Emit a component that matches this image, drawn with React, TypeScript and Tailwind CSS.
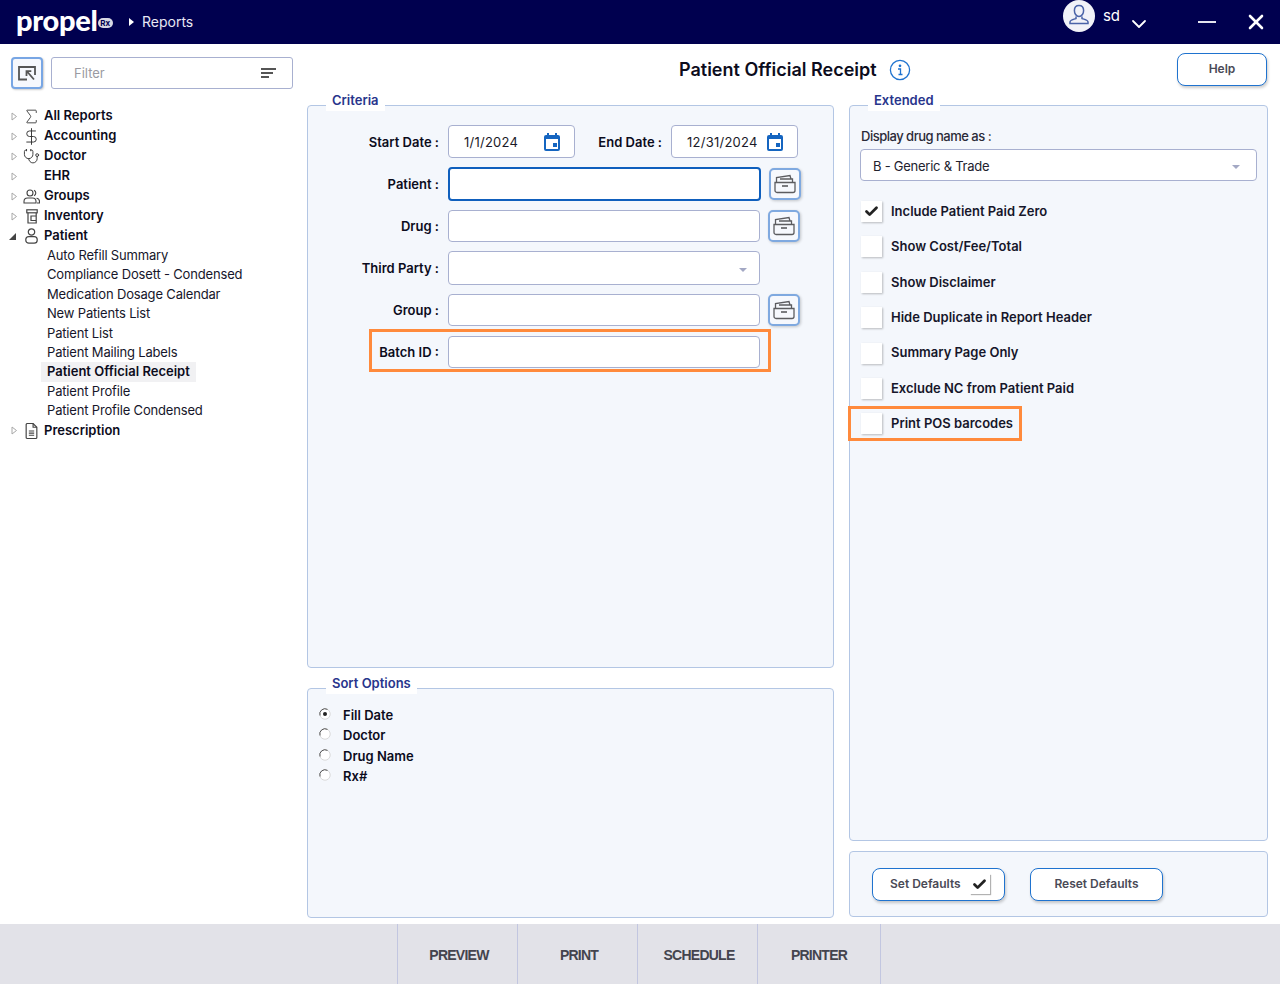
import type { ReactNode } from 'react'
import { Check, ChevronDown, X, Sigma, DollarSign, Stethoscope } from 'lucide-react'

const Calendar = () => (
  <svg width="16" height="18" viewBox="0 0 16 18" className="shrink-0">
    <path d="M3 0h2v2h6V0h2v2h1a2 2 0 0 1 2 2v12a2 2 0 0 1-2 2H2a2 2 0 0 1-2-2V4a2 2 0 0 1 2-2h1z" fill="#1565c0" />
    <rect x="2" y="6" width="12" height="10" fill="#fff" />
    <rect x="9" y="10" width="4" height="4" fill="#1565c0" />
  </svg>
)

const Drawer = () => (
  <svg width="24" height="20" viewBox="0 0 24 20" fill="none" stroke="#5c5c60" strokeWidth="1.3">
    <path d="M3.500 8V3.500L17 1.500l1 3.500M19.500 8V5H7" />
    <path d="M2 8.500h20v8a2 2 0 0 1-2 2H4a2 2 0 0 1-2-2z" />
    <path d="M9 12h6" strokeWidth="1.6" />
  </svg>
)

const FolderButton = () => (
  <button className="ml-2 flex h-8 w-8 shrink-0 items-center justify-center rounded-[5px] border-2 border-[#7fa9e0] bg-[#f6f8fd] shadow-[1px_1px_3px_rgba(0,0,0,0.2)]">
    <Drawer />
  </button>
)

const SelectArrow = () => <span className="block h-0 w-0 border-x-[4px] border-t-[4px] border-x-transparent border-t-[#a3a8c4]" />

const UserGroupIcon = () => (
  <svg width="17" height="15" viewBox="0 0 17 15" fill="none" stroke="#444" strokeWidth="1.1" className="shrink-0">
    <circle cx="7" cy="4" r="3" />
    <path d="M1 14v-1.500A3.500 3.500 0 0 1 4.500 9h5a3.500 3.500 0 0 1 3.500 3.500V14z" />
    <path d="M11 1.300a3 3 0 0 1 0 5.500M13.500 9.200A3.400 3.400 0 0 1 16.500 12.500V14H14" />
  </svg>
)

const BottleIcon = () => (
  <svg width="12" height="15" viewBox="0 0 12 15" fill="none" stroke="#444" strokeWidth="1.2" className="shrink-0">
    <rect x="0.800" y="0.800" width="10.400" height="3" />
    <path d="M2 4v10h8.200V4" />
    <path d="M10 7H5v4.500h5" />
  </svg>
)

const PersonIcon = () => (
  <svg width="13" height="16" viewBox="0 0 13 16" fill="none" stroke="#444" strokeWidth="1.2" className="shrink-0">
    <circle cx="6.500" cy="4" r="3.200" />
    <rect x="0.800" y="8.600" width="11.400" height="6.600" rx="3" />
  </svg>
)

const DocIcon = () => (
  <svg width="13" height="16" viewBox="0 0 12 15" fill="none" stroke="#444" strokeWidth="1.1" className="shrink-0">
    <path d="M1 1.500a1 1 0 0 1 1-1h5.500L11 4v9.500a1 1 0 0 1-1 1H2a1 1 0 0 1-1-1z" />
    <path d="M7.500 0.500V4H11M3.500 7.500h5M3.500 9.500h5M3.500 11.500h5" />
  </svg>
)

function TreeRow({ label, icon, open }: { label: string; icon?: ReactNode; open?: boolean }) {
  return (
    <div className="flex h-5 items-center pl-[9px]">
      <span className="flex w-[15px] items-center">
        {open ? (
          <span className="h-0 w-0 border-b-[7px] border-l-[7px] border-b-[#444] border-l-transparent" />
        ) : (
          <svg width="7" height="9" viewBox="0 0 7 9" className="ml-[2px]">
            <path d="M1 1l4.500 3.500L1 8z" fill="#fff" stroke="#a8a8a8" />
          </svg>
        )}
      </span>
      <span className="mr-[5px] flex w-[15px] shrink-0 justify-center">{icon}</span>
      <span className="font-semibold text-[#0c0c1c]">{label}</span>
    </div>
  )
}

function Sidebar() {
  const patientReports = [
    'Auto Refill Summary',
    'Compliance Dosett - Condensed',
    'Medication Dosage Calendar',
    'New Patients List',
    'Patient List',
    'Patient Mailing Labels',
    'Patient Official Receipt',
    'Patient Profile',
    'Patient Profile Condensed',
  ]

  return (
    <aside className="w-[300px] shrink-0 pt-[13px]">
      <div className="flex gap-2 pl-[11px]">
        <button className="flex h-8 w-8 items-center justify-center rounded-[4px] border-2 border-[#78a6e4] bg-[#f6f8fd] shadow-[1px_1px_2px_rgba(0,0,0,0.2)]">
          <svg width="18" height="15" viewBox="0 0 18 15" fill="none" stroke="#555" strokeWidth="1.8">
            <path d="M9 13.500H1V1h16v8" />
            <path d="M16 13.500L9.500 6M8.500 10V5.200h4.800" />
          </svg>
        </button>
        <div className="flex h-8 w-[242px] items-center justify-between rounded-[3px] border border-[#a8b0d0] pl-[22px] pr-4 text-[#9a9aa2]">
          <span className="pt-[2px]">Filter</span>
          <span className="flex flex-col gap-[2px]">
            <span className="h-[2px] w-[15px] bg-[#555]" />
            <span className="h-[2px] w-[12px] bg-[#555]" />
            <span className="h-[2px] w-[8px] bg-[#555]" />
          </span>
        </div>
      </div>

      <div className="mt-[17px]">
        <TreeRow label="All Reports" icon={<Sigma size={19} strokeWidth={1.1} color="#333" className="shrink-0" />} />
        <TreeRow label="Accounting" icon={<DollarSign size={19} strokeWidth={1.2} color="#333" className="shrink-0" />} />
        <TreeRow label="Doctor" icon={<Stethoscope size={17} strokeWidth={1.3} color="#333" className="shrink-0" />} />
        <TreeRow label="EHR" />
        <TreeRow label="Groups" icon={<UserGroupIcon />} />
        <TreeRow label="Inventory" icon={<BottleIcon />} />
        <TreeRow label="Patient" icon={<PersonIcon />} open />
        <div className="ml-[41px]">
          {patientReports.map((name) => (
            <div
              key={name}
              className={
                name === 'Patient Official Receipt'
                  ? 'flex h-[19.4px] w-fit items-center bg-[#f1f1f3] px-[6px] font-semibold text-[#0c0c1c]'
                  : 'flex h-[19.4px] w-fit items-center px-[6px] tracking-[-0.17px] text-[#16162a]'
              }
            >
              {name}
            </div>
          ))}
        </div>
        <TreeRow label="Prescription" icon={<DocIcon />} />
      </div>
    </aside>
  )
}

function Panel({ title, className, children }: { title?: string; className: string; children: ReactNode }) {
  return (
    <div className={`relative rounded-[4px] border border-[#b3c6e4] bg-[#f4f7fc] ${className}`}>
      {title && (
        <span className="absolute left-[18px] top-[-14px] bg-white px-[6px] pb-[3px] font-semibold leading-[16px] text-[#28358c]">
          {title}
        </span>
      )}
      {children}
    </div>
  )
}

function FieldLabel({ children, className = 'w-[131px]' }: { children: ReactNode; className?: string }) {
  return <label className={`mr-[9px] shrink-0 pt-[2px] text-right font-semibold text-[#0c0c1c] ${className}`}>{children}</label>
}

const fieldClass = 'rounded-[4px] border border-[#a8b0d0] bg-white'

function DateField({ value }: { value: string }) {
  return (
    <div className={`flex h-[33px] w-[127px] items-center justify-between pl-[15px] pr-[14px] text-[#1a1a28] ${fieldClass}`}>
      <span className="pt-[3px] tracking-[0.25px]">{value}</span>
      <Calendar />
    </div>
  )
}

function CriteriaPanel() {
  return (
    <Panel title="Criteria" className="h-[563px] pt-[19px]">
      <div className="flex items-center">
        <FieldLabel>Start Date :</FieldLabel>
        <DateField value="1/1/2024" />
        <FieldLabel className="w-[87px]">End Date :</FieldLabel>
        <DateField value="12/31/2024" />
      </div>
      <div className="mt-[9px] flex items-center">
        <FieldLabel>Patient :</FieldLabel>
        <input readOnly className="h-[34px] w-[313px] rounded-[4px] border-2 border-[#0f5fbd] bg-white" />
        <FolderButton />
      </div>
      <div className="mt-[9px] flex items-center">
        <FieldLabel>Drug :</FieldLabel>
        <input readOnly className={`h-8 w-[312px] ${fieldClass}`} />
        <FolderButton />
      </div>
      <div className="mt-[9px] flex items-center">
        <FieldLabel>Third Party :</FieldLabel>
        <div className={`flex h-[34px] w-[312px] items-center justify-end pr-[12px] pt-[4px] ${fieldClass}`}>
          <SelectArrow />
        </div>
      </div>
      <div className="mt-[9px] flex items-center">
        <FieldLabel>Group :</FieldLabel>
        <input readOnly className={`h-8 w-[312px] ${fieldClass}`} />
        <FolderButton />
      </div>
      <div className="relative mt-[10px] flex items-center">
        <FieldLabel>Batch ID :</FieldLabel>
        <input readOnly className={`h-8 w-[312px] ${fieldClass}`} />
        <div className="pointer-events-none absolute left-[61px] top-[-7px] h-[43px] w-[402px] border-[3px] border-[#ff8a3c]" />
      </div>
    </Panel>
  )
}

function SortPanel() {
  const options = ['Fill Date', 'Doctor', 'Drug Name', 'Rx#']
  return (
    <Panel title="Sort Options" className="h-[230px] pt-[16px]">
      <div className="pl-[11px]">
        {options.map((opt, i) => (
          <div key={opt} className="flex h-[20.3px] items-center">
            <svg width="12" height="12" viewBox="0 0 12 12" className="mr-3 -translate-y-px">
              <circle cx="6" cy="6" r="5.200" fill="#fff" stroke="#d9d9d9" />
              <path d="M1 7.500A5.200 5.200 0 0 1 8.500 1.400" fill="none" stroke="#555" />
              {i === 0 && <circle cx="6" cy="6" r="2" fill="#222" />}
            </svg>
            <span className="pt-px font-semibold text-[#0c0c1c]">{opt}</span>
          </div>
        ))}
      </div>
    </Panel>
  )
}

function CheckRow({ label, checked, highlight }: { label: string; checked?: boolean; highlight?: boolean }) {
  return (
    <div className="relative ml-px flex h-[21px] items-center">
      <span className="mr-[9px] flex h-[21px] w-[21px] items-center justify-center bg-white shadow-[1px_1px_2px_rgba(0,0,0,0.25)]">
        {checked && <Check size={15} strokeWidth={4.5} color="#222" />}
      </span>
      <span className="font-semibold text-[#16162a]">{label}</span>
      {highlight && (
        <div className="pointer-events-none absolute left-[-13px] top-[-7px] h-[35px] w-[174px] border-[3px] border-[#ff8a3c]" />
      )}
    </div>
  )
}

function ExtendedPanel() {
  return (
    <Panel title="Extended" className="h-[736px] px-[10px] pt-[22px]">
      <div className="pl-px font-medium leading-4 tracking-[-0.5px] text-[#2a2a38]">Display drug name as :</div>
      <div className={`mt-[5px] flex h-8 items-center justify-between pl-3 pr-4 text-[#22222e] ${fieldClass}`}>
        <span className="pt-[3px] tracking-[-0.25px]">B - Generic &amp; Trade</span>
        <span className="pt-[4px]">
          <SelectArrow />
        </span>
      </div>
      <div className="mt-5 flex flex-col gap-[14.4px]">
        <CheckRow label="Include Patient Paid Zero" checked />
        <CheckRow label="Show Cost/Fee/Total" />
        <CheckRow label="Show Disclaimer" />
        <CheckRow label="Hide Duplicate in Report Header" />
        <CheckRow label="Summary Page Only" />
        <CheckRow label="Exclude NC from Patient Paid" />
        <CheckRow label="Print POS barcodes" highlight />
      </div>
    </Panel>
  )
}

const outlineBtn =
  'rounded-lg border-[1.5px] border-[#1f73cf] bg-white font-semibold text-[12px] text-[#4a4a56] shadow-[1px_2px_3px_rgba(0,0,0,0.2)]'

function Header() {
  return (
    <header className="flex h-11 shrink-0 items-center bg-[#00004f] text-white">
      <div className="ml-[16px] flex w-[97px] items-center">
        <span className="-mt-[5px] font-['Lato',sans-serif] text-[29px] font-black leading-none tracking-[-0.3px]">propel</span>
        <span className="ml-auto mt-[1px] flex h-[10px] w-[16px] items-center justify-center rounded-full bg-[#d8d8e4] text-[8px] font-bold text-[#00004f]">Rx</span>
      </div>
      <span className="ml-[16px] h-0 w-0 border-y-[4px] border-l-[5px] border-y-transparent border-l-white" />
      <span className="ml-[8px] -mt-px text-[14px] text-[#e8e8f4]">Reports</span>

      <div className="ml-auto flex h-full">
        <div className="flex h-8 w-8 items-center justify-center rounded-full bg-[#f1f2f8]">
          <svg width="22" height="24" viewBox="0 0 22 24" fill="none" stroke="#4a63a8" strokeWidth="1.5">
            <path d="M11 1.500c3 0 4.600 2.300 4.600 5s-1.600 6-4.600 6-4.600-3.300-4.600-6 1.600-5 4.600-5z" />
            <path d="M8 12.500v2c-2.500.8-6 1.500-6 3.500v1.500h18V18c0-2-3.500-2.700-6-3.500v-2" />
          </svg>
        </div>
        <span className="ml-2 mt-[6px] text-[15px] leading-5">sd</span>
        <ChevronDown size={24} strokeWidth={1.8} className="ml-[7px] mt-[12px]" />
        <span className="ml-[47px] mt-[21px] h-[2px] w-[18px] bg-[#e4e4ee]" />
        <X size={24} strokeWidth={2.6} className="ml-[28px] mr-[12px] mt-[10px]" />
      </div>
    </header>
  )
}

export default function App() {
  const actions = ['PREVIEW', 'PRINT', 'SCHEDULE', 'PRINTER']

  return (
    <div className="flex h-[984px] w-[1280px] flex-col overflow-hidden bg-white font-['Inter',sans-serif] text-[13px]">
      <Header />

      <div className="flex flex-1">
        <Sidebar />

        <main className="w-[980px] pl-[7px]">
          <div className="flex h-[61px] items-start">
            <div className="ml-[372px] mt-[12px] flex items-center">
              <h1 className="pt-px text-[18px] font-semibold leading-[26px] text-[#0c0c1c]">Patient Official Receipt</h1>
              <svg width="22" height="22" viewBox="0 0 22 22" fill="none" stroke="#1f73cf" strokeWidth="1.3" className="ml-3 mt-[1px]">
                <circle cx="11" cy="11" r="9.600" />
                <path d="M9 10h2.500v5.500M9.500 15.500h4" />
                <circle cx="11" cy="6.800" r="0.700" />
              </svg>
            </div>
            <button className={`ml-auto mr-[13px] mt-[9px] h-[33px] w-[90px] pb-[2px] ${outlineBtn}`}>Help</button>
          </div>

          <div className="flex gap-[15px]">
            <div className="flex w-[527px] flex-col gap-5">
              <CriteriaPanel />
              <SortPanel />
            </div>
            <div className="flex w-[419px] flex-col gap-[10px]">
              <ExtendedPanel />
              <Panel className="flex h-[66px] items-center gap-[25px] pl-[22px]">
                <button className={`flex h-[33px] w-[133px] items-center pl-[17px] ${outlineBtn}`}>
                  <span>Set Defaults</span>
                  <span className="ml-[9px] flex h-5 w-5 items-center justify-center bg-white shadow-[1px_1px_1px_rgba(0,0,0,0.3)]">
                    <Check size={15} strokeWidth={4.5} color="#222" />
                  </span>
                </button>
                <button className={`h-[33px] w-[133px] ${outlineBtn}`}>Reset Defaults</button>
              </Panel>
            </div>
          </div>
        </main>
      </div>

      <footer className="flex h-[60px] shrink-0 bg-[#e2e2e8] pl-[397px]">
        {actions.map((a, i) => (
          <button
            key={a}
            className={
              i === 3
                ? "flex h-full w-[124px] items-center justify-center border-x border-[#c2c6e0] pt-[2px] font-['Liberation_Sans',sans-serif] text-[14px] font-bold tracking-[-0.75px] text-[#44444e]"
                : "flex h-full w-[120px] items-center justify-center border-l border-[#c2c6e0] pl-[3px] pt-[2px] font-['Liberation_Sans',sans-serif] text-[14px] font-bold tracking-[-0.75px] text-[#44444e]"
            }
          >
            {a}
          </button>
        ))}
      </footer>
    </div>
  )
}
